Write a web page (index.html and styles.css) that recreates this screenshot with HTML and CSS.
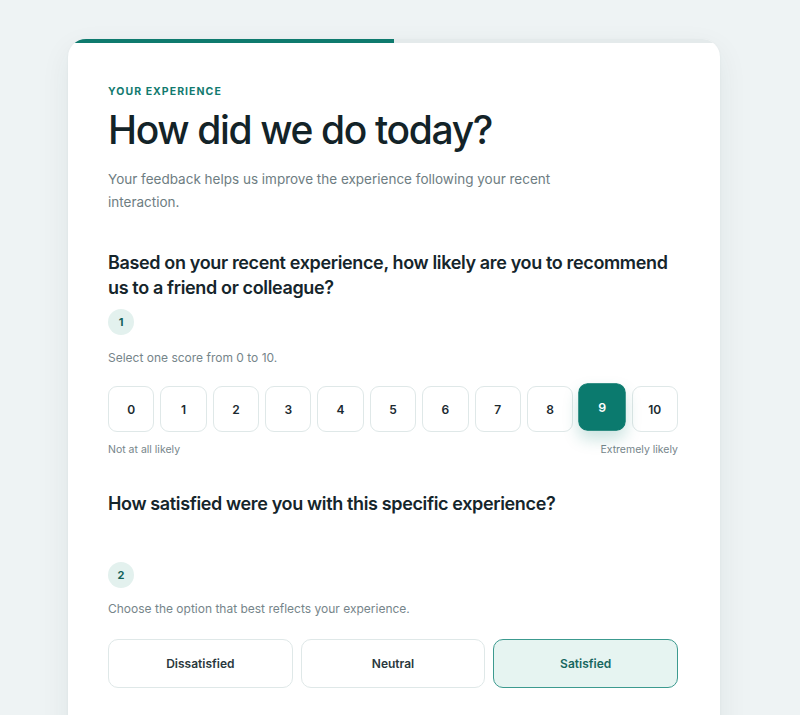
FILE: index.html
```html
<!DOCTYPE html>
<html lang="en">
<head>
<meta charset="utf-8">
<title>How did we do today?</title>
<link rel="stylesheet" href="styles.css">
</head>
<body>
<main class="card">
  <div class="progress"><div class="progress-fill" style="width: 50%"></div></div>
  <div class="card-body">
    <p class="eyebrow">YOUR EXPERIENCE</p>
    <h1 class="title">How did we do today?</h1>
    <p class="lead">Your feedback helps us improve the experience following your recent interaction.</p>

    <section class="question">
      <h2 class="q-title">Based on your recent experience, how likely are you to recommend us to a friend or colleague?</h2>
      <span class="badge">1</span>
      <p class="hint">Select one score from 0 to 10.</p>
      <div class="scale">
        <button class="score">0</button>
        <button class="score">1</button>
        <button class="score">2</button>
        <button class="score">3</button>
        <button class="score">4</button>
        <button class="score">5</button>
        <button class="score">6</button>
        <button class="score">7</button>
        <button class="score">8</button>
        <button class="score is-selected">9</button>
        <button class="score">10</button>
      </div>
      <div class="scale-labels">
        <span>Not at all likely</span>
        <span>Extremely likely</span>
      </div>
    </section>

    <section class="question question-second">
      <h2 class="q-title q-title-tall">How satisfied were you with this specific experience?</h2>
      <span class="badge">2</span>
      <p class="hint hint-second">Choose the option that best reflects your experience.</p>
      <div class="options">
        <button class="option">Dissatisfied</button>
        <button class="option">Neutral</button>
        <button class="option is-selected">Satisfied</button>
      </div>
    </section>
  </div>
</main>
</body>
</html>
```

FILE: styles.css
```css
* { box-sizing: border-box; }

html, body {
  margin: 0;
  padding: 0;
  height: 100%;
}

body {
  background: #eef3f4;
  font-family: "Inter", "Noto Sans", "Liberation Sans", sans-serif;
  color: #15252b;
  overflow: hidden;
}

.card {
  width: 652px;
  margin: 39px 0 0 68px;
  background: #ffffff;
  border-radius: 18px 18px 0 0;
  overflow: hidden;
  box-shadow: 0 10px 30px rgba(20, 50, 60, 0.07), 0 1px 3px rgba(20, 50, 60, 0.05);
  min-height: 720px;
}

.progress {
  height: 4px;
  background: #e4eaeb;
}

.progress-fill {
  height: 100%;
  background: #0e7a6e;
}

.card-body {
  padding: 41px 42px 40px 40px;
}

.eyebrow {
  margin: 0;
  font-size: 10.5px;
  line-height: 16px;
  font-weight: 700;
  letter-spacing: 0.1em;
  color: #127a6f;
}

.title {
  margin: 8px 0 0;
  font-size: 39px;
  line-height: 44px;
  font-weight: 500;
  letter-spacing: -0.035em;
  color: #132328;
}

.lead {
  margin: 16px 0 0;
  max-width: 450px;
  font-size: 13.5px;
  line-height: 23px;
  color: #6e7d82;
}

.question {
  margin-top: 36px;
}

.question-second {
  margin-top: 33px;
}

.q-title {
  margin: 0;
  font-size: 18px;
  line-height: 25px;
  font-weight: 600;
  letter-spacing: -0.02em;
  color: #15252b;
}

.q-title-tall {
  min-height: 62px;
}

.badge {
  display: flex;
  align-items: center;
  justify-content: center;
  width: 26px;
  height: 26px;
  margin-top: 9px;
  border-radius: 50%;
  background: #e3f1ee;
  color: #14625a;
  font-size: 11px;
  font-weight: 700;
}

.hint {
  margin: 14px 0 0;
  font-size: 12px;
  line-height: 18px;
  color: #76858a;
}

.hint-second {
  margin-top: 12px;
}

.scale {
  display: flex;
  gap: 6px;
  margin-top: 19px;
}

.score {
  flex: 1;
  height: 46px;
  padding: 0;
  border: 1px solid #dfe8e8;
  border-radius: 9px;
  background: #ffffff;
  font-family: inherit;
  font-size: 12px;
  font-weight: 600;
  color: #1b2a30;
}

.score.is-selected {
  background: #0b7a6e;
  border-color: #0b7a6e;
  color: #ffffff;
  transform: translateY(-2px) scale(1.03);
  box-shadow: 0 8px 16px rgba(11, 122, 110, 0.22);
}

.scale-labels {
  display: flex;
  justify-content: space-between;
  margin-top: 10px;
  font-size: 10.5px;
  line-height: 16px;
  color: #76858a;
}

.options {
  display: flex;
  gap: 8px;
  margin-top: 21px;
}

.option {
  flex: 1;
  height: 49px;
  padding: 0;
  border: 1px solid #dfe8e8;
  border-radius: 10px;
  background: #ffffff;
  font-family: inherit;
  font-size: 12px;
  font-weight: 600;
  color: #2a383d;
}

.option.is-selected {
  background: #e6f4f1;
  border: 1.5px solid #3c9a8f;
  color: #17675f;
}
```
